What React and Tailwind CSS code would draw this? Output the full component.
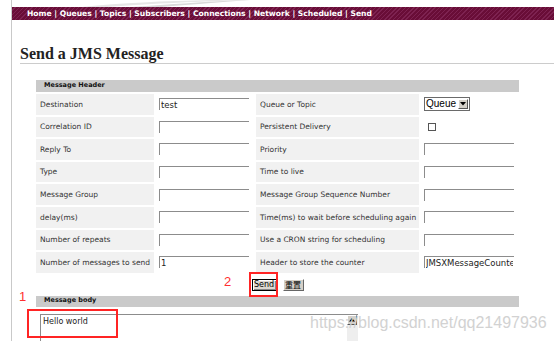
const leftRows = [
  ['Destination', 'test'],
  ['Correlation ID', ''],
  ['Reply To', ''],
  ['Type', ''],
  ['Message Group', ''],
  ['delay(ms)', ''],
  ['Number of repeats', ''],
  ['Number of messages to send', '1'],
];

const rightRows = [
  ['Queue or Topic', 'select'],
  ['Persistent Delivery', 'checkbox'],
  ['Priority', ''],
  ['Time to live', ''],
  ['Message Group Sequence Number', ''],
  ['Time(ms) to wait before scheduling again', ''],
  ['Use a CRON string for scheduling', ''],
  ['Header to store the counter', 'JMSXMessageCounter'],
];

const navLinks = ['Home', 'Queues', 'Topics', 'Subscribers', 'Connections', 'Network', 'Scheduled', 'Send'];

function TextField({ value }) {
  return (
    <input
      readOnly
      defaultValue={value}
      className="block h-[12px] w-[90px] border-t border-l border-t-[#8c8c8c] border-l-[#8c8c8c] bg-white px-[1px] text-[8.5px] leading-[10px] text-[#222] outline-none"
    />
  );
}

function QueueSelect() {
  return (
    <div className="flex h-[14px] w-[46px] items-center border border-[#6a6a6a] bg-white">
      <span className="grow pl-[1px] font-['Liberation_Sans',sans-serif] text-[10px] leading-[12px] text-black">Queue</span>
      <span className="mr-[1px] flex h-[10px] w-[10px] items-center justify-center border border-t-white border-l-white border-r-[#555] border-b-[#555] bg-[#d4d0c8]">
        <svg width="6" height="4" viewBox="0 0 6 4">
          <path d="M0 0 H6 L3 3.5 Z" fill="#000" />
        </svg>
      </span>
    </div>
  );
}

function FieldCell({ kind }) {
  if (kind === 'select') return <QueueSelect />;
  if (kind === 'checkbox')
    return <div className="ml-[4px] h-[8px] w-[8px] border border-[#555] bg-white" />;
  return <TextField value={kind} />;
}

function App() {
  return (
    <div className="relative h-[341px] w-[554px] overflow-hidden bg-white font-['DejaVu_Sans',Verdana,sans-serif]">
      <div className="ml-[11px] h-full border-l border-[#c9c9c9]">
        <div className="h-[7px] overflow-hidden">
          <svg width="543" height="7" viewBox="0 0 543 7">
            <path d="M70 7 C110 3 150 1 200 0 L230 0 C180 2 130 4 95 7 Z" fill="#e6e6e6" />
            <path d="M120 7 C160 4 190 2 232 0 L238 0 C200 3 170 5 150 7 Z" fill="#d9d9d9" />
          </svg>
        </div>

        <div className="flex h-[13px] items-center bg-[repeating-linear-gradient(135deg,#690d37_0px,#690d37_2px,#7d2250_2px,#7d2250_3px)] pl-[15px] text-[7.6px] font-bold leading-[13px] whitespace-nowrap text-white">
          {navLinks.join(' | ')}
        </div>

        <div className="ml-[8px] border-b border-[#cccccc] pt-[25px]">
          <h1 className="font-['Liberation_Serif',Georgia,serif] text-[16px] leading-[18px] font-bold text-[#222]">
            Send a JMS Message
          </h1>
        </div>

        <div className="mt-[16px] ml-[24px] w-[483px]">
          <div className="flex flex-col gap-[2px]">
            <div className="flex h-[12px] items-center bg-[#cacaca] pl-[8px] text-[6.5px] font-bold text-[#111]">
              Message Header
            </div>
            {leftRows.map(([label, value], i) => (
              <div key={label} className="grid h-[20.6px] grid-cols-[118px_102px_163px_100px] text-[7.5px] text-[#333]">
                <div className="flex items-center bg-[#f1f1f1] pl-[4px]">{label}</div>
                <div className="flex items-center pl-[5px]">
                  <TextField value={value} />
                </div>
                <div className="flex items-center bg-[#f1f1f1] pl-[4px] whitespace-nowrap">{rightRows[i][0]}</div>
                <div className="flex items-center overflow-hidden pl-[5px]">
                  <FieldCell kind={rightRows[i][1]} />
                </div>
              </div>
            ))}
          </div>

          <div className="mt-[6px] flex justify-center gap-[6px]">
            <button className="flex h-[12px] w-[25px] items-center justify-center border border-black bg-[#dcd8d0] text-[8px] leading-[10px] text-black shadow-[inset_1px_1px_0_#fff,inset_-1px_-1px_0_#888]">
              Send
            </button>
            <button className="flex h-[12px] w-[21px] items-center justify-center border border-t-white border-l-white border-r-[#666] border-b-[#666] bg-[#d4d0c8] font-['Noto_Sans_CJK_SC',sans-serif] text-[8px] leading-[10px] text-black">
              重置
            </button>
          </div>

          <div className="mt-[5px] flex h-[11px] items-center bg-[#cacaca] pl-[8px] text-[6.5px] font-bold text-[#111]">
            Message body
          </div>

          <div className="mt-[7px] ml-[4px] flex h-[40px] w-[318px] border-t border-l border-t-[#8c8c8c] border-l-[#8c8c8c] bg-white">
            <div className="grow pt-[2px] pl-[2px] text-[8px] leading-[10px] text-[#222]">Hello world</div>
            <div className="flex w-[11px] flex-col bg-[#eeeeee]">
              <div className="flex h-[10px] w-[10px] items-center justify-center border border-t-white border-l-white border-r-[#555] border-b-[#555] bg-[#d4d0c8]">
                <svg width="6" height="4" viewBox="0 0 6 4">
                  <path d="M3 0 L6 3.5 H0 Z" fill="#000" />
                </svg>
              </div>
            </div>
          </div>
        </div>
      </div>

      <div className="pointer-events-none absolute top-[313px] left-[310px] font-['Liberation_Sans',Arial,sans-serif] text-[16px] leading-[20px] whitespace-nowrap text-[#d2d2d2]">
        https://blog.csdn.net/qq21497936
      </div>

      <div className="absolute top-[290px] left-[19px] font-['Liberation_Sans',Arial,sans-serif] text-[13px] leading-[13px] text-[#ff3030]">1</div>
      <div className="absolute top-[275px] left-[224px] font-['Liberation_Sans',Arial,sans-serif] text-[13px] leading-[13px] text-[#ff3030]">2</div>
      <div className="absolute top-[309px] left-[27px] h-[29px] w-[91px] border-2 border-[#ff2424]" />
      <div className="absolute top-[272px] left-[249px] h-[25px] w-[29px] border-2 border-[#ff2424]" />
    </div>
  );
}

export default App;
